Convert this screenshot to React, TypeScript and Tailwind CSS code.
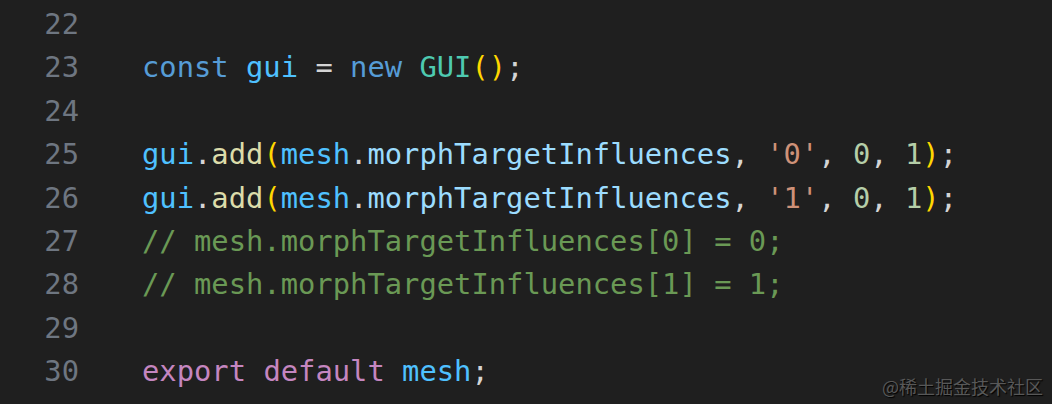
type Tok = [string, string];

const C = {
  kw: "text-[#569cd6]",
  cst: "text-[#4fc1ff]",
  prop: "text-[#9cdcfe]",
  cls: "text-[#4ec9b0]",
  fn: "text-[#dcdcaa]",
  br: "text-[#ffd700]",
  pun: "text-[#d4d4d4]",
  str: "text-[#ce9178]",
  num: "text-[#b5cea8]",
  cmt: "text-[#6a9955]",
  ctl: "text-[#c586c0]",
};

const lines: { n: number; toks: Tok[] }[] = [
  { n: 22, toks: [] },
  {
    n: 23,
    toks: [
      ["const", C.kw], [" ", C.pun], ["gui", C.cst], [" = ", C.pun], ["new", C.kw], [" ", C.pun],
      ["GUI", C.cls], ["()", C.br], [";", C.pun],
    ],
  },
  { n: 24, toks: [] },
  {
    n: 25,
    toks: [
      ["gui", C.cst], [".", C.pun], ["add", C.fn], ["(", C.br], ["mesh", C.cst], [".", C.pun],
      ["morphTargetInfluences", C.prop], [", ", C.pun], ["'0'", C.str], [", ", C.pun], ["0", C.num],
      [", ", C.pun], ["1", C.num], [")", C.br], [";", C.pun],
    ],
  },
  {
    n: 26,
    toks: [
      ["gui", C.cst], [".", C.pun], ["add", C.fn], ["(", C.br], ["mesh", C.cst], [".", C.pun],
      ["morphTargetInfluences", C.prop], [", ", C.pun], ["'1'", C.str], [", ", C.pun], ["0", C.num],
      [", ", C.pun], ["1", C.num], [")", C.br], [";", C.pun],
    ],
  },
  { n: 27, toks: [["// mesh.morphTargetInfluences[0] = 0;", C.cmt]] },
  { n: 28, toks: [["// mesh.morphTargetInfluences[1] = 1;", C.cmt]] },
  { n: 29, toks: [] },
  { n: 30, toks: [["export", C.ctl], [" ", C.pun], ["default", C.ctl], [" ", C.pun], ["mesh", C.cst], [";", C.pun]] },
  { n: 31, toks: [] },
];

export default function App() {
  return (
    <div className="relative w-[1052px] h-[404px] overflow-hidden bg-[#1f1f1f]">
      <div className="pt-[3px] font-['DejaVu_Sans_Mono',monospace] text-[28.8px] leading-[43.4px] whitespace-pre">
        {lines.map((line) => (
          <div key={line.n} className="flex h-[43.4px]">
            <span className="w-[79px] text-right text-[#6e7681]">{line.n}</span>
            <span className="ml-[63px]">
              {line.toks.map(([t, c], i) => (
                <span key={i} className={c}>{t}</span>
              ))}
            </span>
          </div>
        ))}
      </div>
      <div className="absolute right-[9px] bottom-[6px] font-['Noto_Sans_CJK_SC',sans-serif] text-[18px] leading-[24px] text-[#585858] [text-shadow:1px_1px_1px_#000]">
        @稀土掘金技术社区
      </div>
    </div>
  );
}
